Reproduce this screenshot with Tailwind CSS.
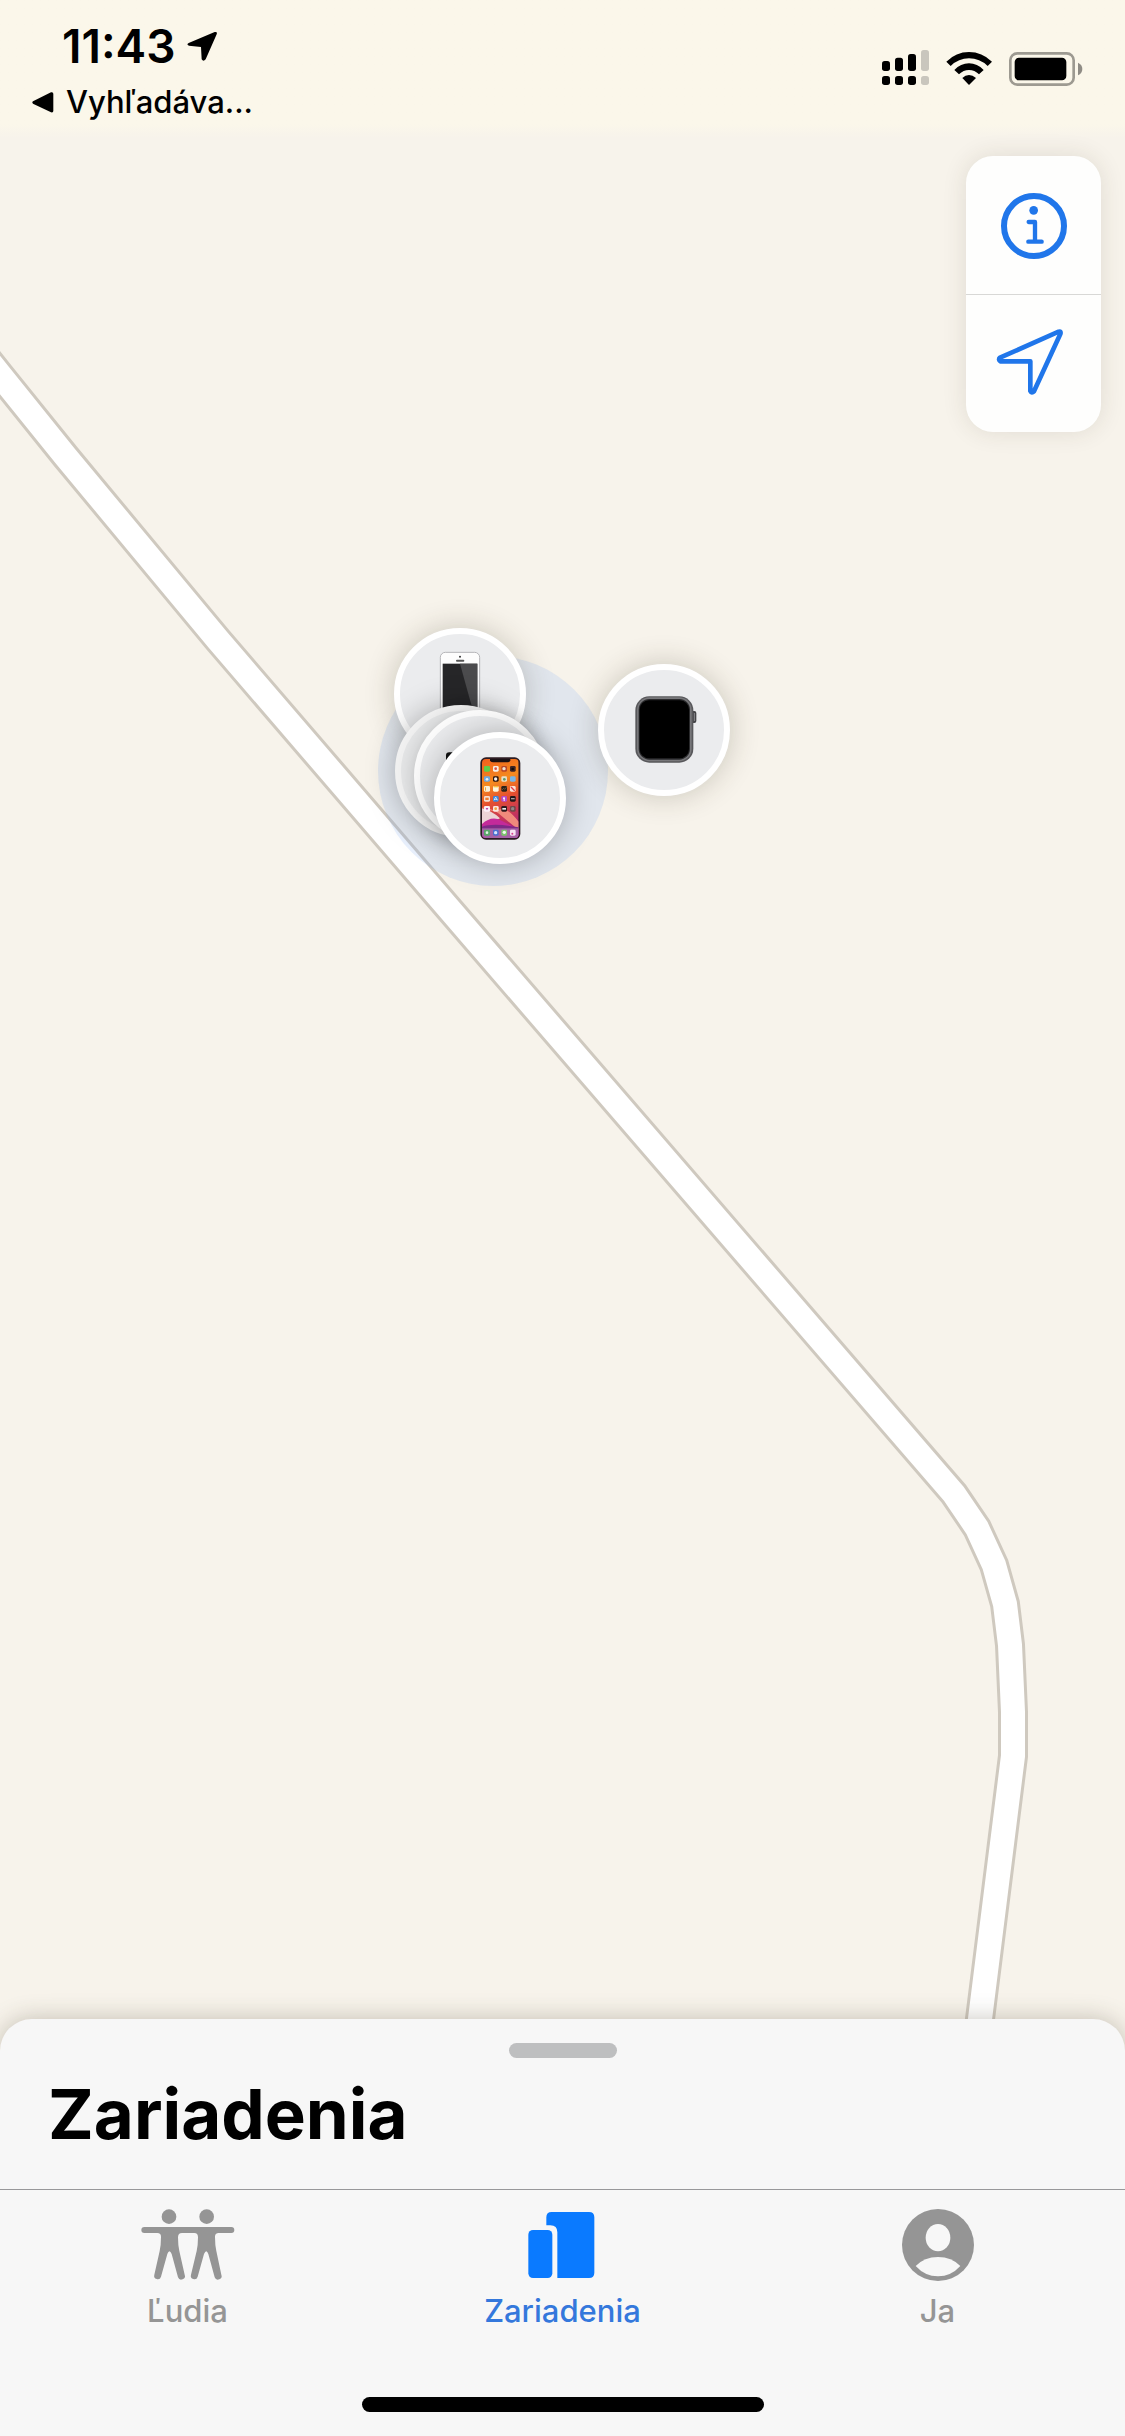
<!DOCTYPE html>
<html lang="sk">
<head>
  <meta charset="UTF-8" />
  <meta name="viewport" content="width=device-width, initial-scale=1.0" />
  <title>Zariadenia</title>
  <script src="https://cdn.jsdelivr.net/npm/@tailwindcss/browser@4"></script>
</head>
<body class="font-[Inter,sans-serif] text-black bg-[#f7f3eb]">

  <div class="relative min-h-screen flex flex-col overflow-hidden">

    <!-- Map -->
    <svg class="absolute inset-0 w-full h-full" viewBox="0 0 1125 2436" preserveAspectRatio="xMidYMid slice" fill="none" aria-hidden="true">
      <path d="M-20 350L0 375L66 457L218 640L450 910L954 1494L977 1528L994 1565L1005 1604L1010 1645L1013 1712L1013 1756L980 2019L970 2100" stroke="#cfc9bf" stroke-width="30" />
      <path d="M-20 350L0 375L66 457L218 640L450 910L954 1494L977 1528L994 1565L1005 1604L1010 1645L1013 1712L1013 1756L980 2019L970 2100" stroke="#ffffff" stroke-width="24" />
    </svg>

    <!-- Pins -->
    <div class="absolute inset-0">
      <div class="absolute left-[378px] top-[656px] size-[230px] rounded-full bg-[#8eb4f5]/20"></div>

      <button type="button" aria-label="iPhone SE" class="absolute left-[394px] top-[628px] size-[132px] rounded-full bg-[#ebecee] border-6 border-white shadow-[0_0_30px_rgba(60,50,30,0.24)]">
        <svg class="size-full" viewBox="120 102 360 360">
          <rect x="241" y="157" width="118" height="240" rx="15" fill="#fdfdfd" stroke="#b5b5b8" stroke-width="3" />
          <rect x="248" y="191" width="104" height="180" fill="#262628" />
          <path d="M300 191H352V371L330 300Z" fill="#4b4b4d" />
          <circle cx="300" cy="170" r="3" fill="#333" />
          <rect x="288" y="179" width="25" height="6" rx="3" fill="#555" />
        </svg>
      </button>

      <button type="button" aria-label="Zariadenie" class="absolute left-[395px] top-[705px] size-[132px] rounded-full bg-[#e4e5e6] border-6 border-[#f0f0f0] shadow-[0_0_30px_rgba(0,0,0,0.28)]"></button>

      <button type="button" aria-label="iPhone" class="absolute left-[414px] top-[710px] size-[132px] rounded-full bg-[#e9eaec] border-6 border-[#fbfbfb] shadow-[0_0_18px_rgba(0,0,0,0.16)]">
        <svg class="size-full" viewBox="180 348 360 360">
          <rect x="258" y="457" width="90" height="150" rx="10" fill="#111" />
        </svg>
      </button>

      <button type="button" aria-label="iPhone 11 Pro" class="absolute left-[434px] top-[732px] size-[132px] rounded-full bg-[#ebecee] border-6 border-white shadow-[0_0_30px_rgba(0,0,0,0.26)]">
        <svg class="size-full" viewBox="240 414 360 360">
          <defs>
            <linearGradient id="wall" x1="0" y1="0" x2="0.2" y2="1">
              <stop offset="0" stop-color="#f0601e" />
              <stop offset="0.35" stop-color="#f58a1f" />
              <stop offset="0.58" stop-color="#e5502f" />
              <stop offset="1" stop-color="#b02378" />
            </linearGradient>
            <clipPath id="screen"><rect x="366" y="477" width="110" height="237" rx="12" /></clipPath>
          </defs>
          <rect x="361" y="472" width="120" height="247" rx="17" fill="#2b1b22" />
          <g clip-path="url(#screen)">
            <rect x="366" y="477" width="110" height="237" fill="url(#wall)" />
            <path d="M366 622Q395 625 415 640L476 690V665Q440 620 420 628Q395 640 366 622Z" fill="#f08a7c" />
            <path d="M366 625Q400 635 420 655L366 680Z" fill="#ecd3d6" />
            <path d="M366 672Q395 645 425 662Q450 675 476 690V714H366Z" fill="#c42a9a" />
            <path d="M366 680Q400 668 476 682V714H366Z" fill="#7d2a86" />
            <path d="M390 477H451V481Q450 487 443 487H399Q391 487 390 481Z" fill="#1a1014" />
            <rect x="366" y="685" width="110" height="29" fill="#d9a5cf" opacity="0.45" />
          </g>
          <!-- home screen apps -->
          <g>
            <rect x="372" y="498" width="18" height="17" rx="4" fill="#5fce4b" />
            <rect x="399" y="498" width="17" height="17" rx="4" fill="#f6efe8" />
            <rect x="424" y="498" width="17" height="17" rx="4" fill="#b8472a" />
            <rect x="450" y="498" width="17" height="17" rx="4" fill="#3b2424" />
            <rect x="372" y="529" width="18" height="16" rx="4" fill="#6fa9dd" />
            <rect x="399" y="529" width="17" height="16" rx="4" fill="#2b1712" />
            <rect x="424" y="529" width="17" height="16" rx="4" fill="#e8dfc8" />
            <rect x="450" y="529" width="17" height="16" rx="4" fill="#78b6e6" />
            <rect x="372" y="558" width="18" height="17" rx="4" fill="#f8f0da" />
            <rect x="399" y="558" width="17" height="17" rx="4" fill="#fdf5dc" />
            <rect x="424" y="558" width="17" height="17" rx="4" fill="#2c2117" />
            <rect x="450" y="558" width="17" height="17" rx="4" fill="#f9e4dc" />
            <rect x="372" y="588" width="18" height="17" rx="4" fill="#f5dfd3" />
            <rect x="399" y="588" width="17" height="17" rx="4" fill="#3d86dc" />
            <rect x="424" y="588" width="17" height="17" rx="4" fill="#b64bc9" />
            <rect x="450" y="588" width="17" height="17" rx="4" fill="#22181a" />
            <rect x="372" y="618" width="18" height="17" rx="4" fill="#fbeef6" />
            <rect x="399" y="618" width="17" height="17" rx="4" fill="#fbe5df" />
            <rect x="424" y="618" width="17" height="17" rx="4" fill="#2e1a1e" />
            <rect x="450" y="618" width="17" height="17" rx="4" fill="#70484a" />
            <rect x="372" y="689" width="18" height="18" rx="4" fill="#58a868" />
            <rect x="399" y="689" width="17" height="18" rx="4" fill="#4c6fd0" />
            <rect x="424" y="689" width="17" height="18" rx="4" fill="#7cc46c" />
            <rect x="450" y="689" width="17" height="18" rx="4" fill="#f6e3f2" />
            <circle cx="407" cy="506" r="4" fill="#d9534a" />
            <circle cx="432" cy="506" r="5" fill="#f0e2d5" />
            <circle cx="458" cy="507" r="4" fill="#0f0c0d" />
            <circle cx="381" cy="538" r="4" fill="#e9f1f5" />
            <circle cx="407" cy="537" r="5" fill="#f7f3ee" />
            <circle cx="433" cy="538" r="4" fill="#5c9a6e" />
            <rect x="375" y="562" width="3" height="10" fill="#efaa3e" />
            <rect x="401" y="558" width="13" height="4" fill="#f4c13c" />
            <path d="M426 570L431 565L434 568L439 562" stroke="#8a6d50" stroke-width="2" fill="none" />
            <path d="M453 561L464 572" stroke="#e03c4c" stroke-width="4" />
            <rect x="376" y="593" width="10" height="7" fill="#ee7d33" />
            <path d="M402 601L407 591L412 601M402 598H412" stroke="#fff" stroke-width="2" fill="none" />
            <circle cx="432" cy="595" r="3" fill="#fff" />
            <rect x="431" y="597" width="3" height="6" fill="#fff" />
            <rect x="453" y="594" width="11" height="4" fill="#a89ea0" />
            <path d="M377 624H385L381 631Z" fill="#b93fae" />
            <circle cx="407" cy="626" r="4" fill="#f0a23d" />
            <rect x="427" y="624" width="11" height="5" fill="#eee" />
            <circle cx="458" cy="626" r="5" fill="#8f8587" />
            <circle cx="381" cy="698" r="4" fill="#e4f3e6" />
            <circle cx="407" cy="698" r="5" fill="#d9e5fb" />
            <circle cx="433" cy="697" r="5" fill="#f3fbf0" />
            <circle cx="457" cy="701" r="3" fill="#d83e90" />
          </g>
        </svg>
      </button>

      <button type="button" aria-label="Apple Watch" class="absolute left-[598px] top-[664px] size-[132px] rounded-full bg-[#ebecee] border-6 border-white shadow-[0_0_30px_rgba(60,50,30,0.24)]">
        <svg class="size-full" viewBox="732 210 360 360">
          <rect x="994" y="333" width="15" height="36" rx="6" fill="#444447" />
          <path d="M1003 339V363" stroke="#8b8b8e" stroke-width="3" />
          <rect x="826" y="289" width="174" height="199" rx="42" fill="#58585b" />
          <rect x="831" y="292" width="164" height="192" rx="38" fill="#77777a" />
          <rect x="836" y="297" width="154" height="182" rx="32" fill="#2a2a2c" />
          <rect x="839" y="301" width="148" height="174" rx="28" fill="#000" />
        </svg>
      </button>
    </div>

    <!-- Status bar -->
    <header class="relative h-[138px] pl-8 pr-[42px] flex justify-between bg-linear-to-b from-[#fbf7ea] from-90% to-[#f7f3eb]">
      <div class="pt-[22px]">
        <div class="flex items-center gap-3 pl-[30px] h-12">
          <span class="text-[46px] leading-[48px] font-semibold">11:43</span>
          <svg class="w-[31px] h-[31px]" viewBox="562 94 93 93" aria-hidden="true">
            <path d="M567 130L645 97Q654 95 651 104L618 179Q611 187 606 179L604 142L568 138Q559 134 567 130Z" />
          </svg>
        </div>
        <button type="button" class="flex items-center gap-3 h-10 mt-3">
          <svg class="w-[22px] h-[21px]" viewBox="95 276 66 63" aria-hidden="true">
            <path d="M98 304L152 277Q159 275 159 282V332Q159 339 152 337L98 311Q94 307 98 304Z" />
          </svg>
          <span class="text-[31px] leading-10 font-medium">Vyhľadáva...</span>
        </button>
      </div>
      <div class="flex gap-[17px] pt-[50px]">
        <svg class="w-[47px] h-[37px]" viewBox="96 90 141 111" role="img" aria-label="Signál">
          <rect x="96" y="123" width="24" height="30" rx="8" />
          <rect x="135" y="113" width="24" height="40" rx="8" />
          <rect x="174" y="102" width="24" height="51" rx="8" />
          <rect x="96" y="168" width="24" height="27" rx="8" />
          <rect x="135" y="168" width="24" height="27" rx="8" />
          <rect x="174" y="168" width="24" height="27" rx="8" />
          <rect x="213" y="90" width="24" height="63" rx="8" fill="#c9c6bd" />
          <rect x="213" y="168" width="24" height="27" rx="8" fill="#c9c6bd" />
        </svg>
        <svg class="w-[46px] h-[37px]" viewBox="288 90 138 111" role="img" aria-label="Wi-Fi">
          <path d="M289 125Q318 96 357 96Q396 96 426 125L413 138Q389 115 357 115Q326 115 302 138Z" />
          <path d="M313 150Q332 130 357 130Q382 130 401 150L387 163Q374 150 357 150Q340 150 327 163Z" />
          <path d="M337 174Q346 165 357 165Q368 165 378 174L357 195Z" />
        </svg>
        <svg class="w-[74px] h-[37px]" viewBox="477 90 222 111" role="img" aria-label="Batéria">
          <rect x="481" y="100" width="190" height="94" rx="21" fill="none" stroke="#9d9a91" stroke-width="8" />
          <rect x="494" y="113" width="155" height="68" rx="13" />
          <path d="M684 128Q697 134 697 147Q697 160 684 166Z" fill="#8f8c85" />
        </svg>
      </div>
    </header>

    <!-- Map controls -->
    <main class="relative flex-1 pt-[18px] pr-6 flex justify-end items-start pointer-events-none">
      <div class="w-[135px] rounded-[27px] bg-[#fefefd] shadow-[0_0_24px_rgba(60,50,30,0.12)] pointer-events-auto">
        <button type="button" aria-label="Informácie" class="w-full h-[139px] pt-0.5 border-b border-[#d8d8d6] flex items-center justify-center">
          <svg class="size-[68px]" viewBox="180 186 204 204" fill="none" stroke="#2076ea" stroke-linecap="round" stroke-linejoin="round">
            <circle cx="282" cy="288" r="90" stroke-width="18" />
            <circle cx="281" cy="241" r="13" fill="#2076ea" stroke="none" />
            <path d="M266 276H285V334M265 335H305" stroke-width="13" />
          </svg>
        </button>
        <button type="button" aria-label="Moja poloha" class="w-full h-[137px] pr-2 pb-1 flex items-center justify-center">
          <svg class="size-[68px]" viewBox="165 594 204 204" fill="none" stroke="#2076ea" stroke-width="14" stroke-linejoin="round">
            <path d="M177 683L353 605Q361 603 358 612L279 784Q272 791 268 783V694H178Q171 688 177 683Z" />
          </svg>
        </button>
      </div>
    </main>

    <!-- Bottom sheet -->
    <footer class="relative rounded-t-[32px] bg-[#f7f7f7] shadow-[0_0_24px_rgba(60,50,30,0.28)]">
      <div class="pt-6 px-12 pb-[39px]">
        <div class="w-[108px] h-[15px] mx-auto rounded-full bg-[#bebfc0]"></div>
        <h1 class="mt-5 text-[69px] leading-[72px] font-bold">Zariadenia</h1>
      </div>
      <nav class="grid grid-cols-3 border-t border-[#98989a] pt-[19px] text-[31px] leading-10 font-medium text-[#959595]">
        <a href="#ludia" class="flex flex-col items-center gap-2.5">
          <svg class="w-24 h-[72px]" viewBox="122 87 288 216" fill="currentColor" aria-hidden="true">
            <circle cx="209" cy="110" r="22" />
            <circle cx="322" cy="110" r="22" />
            <path d="M135 141H396A9 9 0 0 1 396 159H358Q347 159 347 170Q347 195 351 213L366 284A10 10 0 0 1 346 292L327 222Q321 206 314 222L295 290A10 10 0 0 1 275 284L292 213Q296 195 296 172Q296 159 285 159H248Q236 159 236 172Q236 195 240 213L256 284A10 10 0 0 1 236 292L217 222Q210 206 204 222L185 290A10 10 0 0 1 165 284L181 213Q185 195 185 170Q185 159 174 159H135A9 9 0 0 1 135 141Z" />
          </svg>
          <span>Ľudia</span>
        </a>
        <a href="#zariadenia" aria-current="page" class="flex flex-col items-center gap-2.5 text-[#3478dc]">
          <svg class="size-[72px]" viewBox="200 87 216 216" fill="#0a7aff" aria-hidden="true">
            <rect x="204" y="150" width="72" height="144" rx="14" />
            <path d="M274 96H386Q402 96 402 112V278Q402 294 386 294H291V157Q291 136 270 136H258V112Q258 96 274 96Z" />
          </svg>
          <span>Zariadenia</span>
        </a>
        <a href="#ja" class="flex flex-col items-center gap-2.5">
          <svg class="size-[72px]" viewBox="153 87 216 216" aria-hidden="true">
            <circle cx="261" cy="195" r="108" fill="currentColor" />
            <ellipse cx="261" cy="173" rx="37" ry="41" fill="#f7f7f7" />
            <path d="M194 258Q220 231 261 231Q302 231 328 258Q300 289 261 289Q222 289 194 258Z" fill="#f7f7f7" />
          </svg>
          <span>Ja</span>
        </a>
      </nav>
      <div class="w-[402px] h-[15px] mt-[66px] mb-6 mx-auto rounded-full bg-black"></div>
    </footer>
  </div>

</body>
</html>
